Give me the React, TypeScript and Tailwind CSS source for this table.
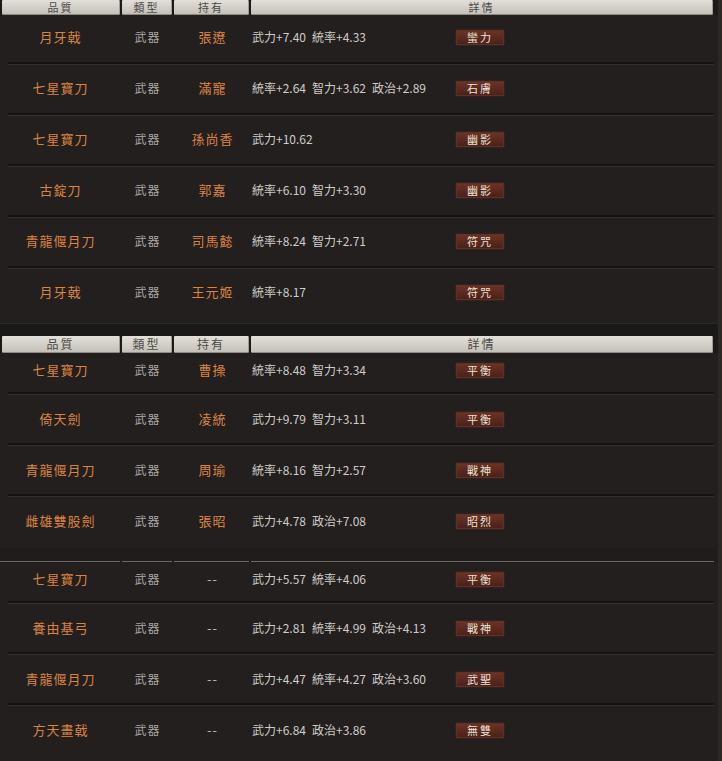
import React from "react";

interface Item {
  name: string;
  holder: string;
  stats: string[];
  badge: string;
}

const section1: Item[] = [
  { name: "月牙戟", holder: "張遼", stats: ["武力+7.40", "統率+4.33"], badge: "蠻力" },
  { name: "七星寶刀", holder: "滿寵", stats: ["統率+2.64", "智力+3.62", "政治+2.89"], badge: "石膚" },
  { name: "七星寶刀", holder: "孫尚香", stats: ["武力+10.62"], badge: "幽影" },
  { name: "古錠刀", holder: "郭嘉", stats: ["統率+6.10", "智力+3.30"], badge: "幽影" },
  { name: "青龍偃月刀", holder: "司馬懿", stats: ["統率+8.24", "智力+2.71"], badge: "符咒" },
  { name: "月牙戟", holder: "王元姬", stats: ["統率+8.17"], badge: "符咒" },
];

const section2: Item[] = [
  { name: "七星寶刀", holder: "曹操", stats: ["統率+8.48", "智力+3.34"], badge: "平衡" },
  { name: "倚天劍", holder: "凌統", stats: ["武力+9.79", "智力+3.11"], badge: "平衡" },
  { name: "青龍偃月刀", holder: "周瑜", stats: ["統率+8.16", "智力+2.57"], badge: "戰神" },
  { name: "雌雄雙股劍", holder: "張昭", stats: ["武力+4.78", "政治+7.08"], badge: "昭烈" },
];

const section3: Item[] = [
  { name: "七星寶刀", holder: "--", stats: ["武力+5.57", "統率+4.06"], badge: "平衡" },
  { name: "養由基弓", holder: "--", stats: ["武力+2.81", "統率+4.99", "政治+4.13"], badge: "戰神" },
  { name: "青龍偃月刀", holder: "--", stats: ["武力+4.47", "統率+4.27", "政治+3.60"], badge: "武聖" },
  { name: "方天畫戟", holder: "--", stats: ["武力+6.84", "政治+3.86"], badge: "無雙" },
];

const font = "font-['Noto_Sans_CJK_TC','Noto_Sans',sans-serif]";

function HeaderCell({ label, width, text }: { label: string; width: string; text: string }) {
  return (
    <div
      className={`${width} h-full flex items-center justify-center bg-gradient-to-b from-[#e2e0da] to-[#c4c1b9] border-b border-b-[#8e8a83] border-r border-r-[#a29e97] ${text} leading-none text-[#4b4a47] tracking-[2px] rounded-[1px]`}
    >
      {label}
    </div>
  );
}

function Header({ height, text = "text-[12px]" }: { height: string; text?: string }) {
  return (
    <div className={`flex gap-[2px] pl-[2px] pr-[5px] ${height}`}>
      <HeaderCell label="品質" width="w-[118px]" text={text} />
      <HeaderCell label="類型" width="w-[50px]" text={text} />
      <HeaderCell label="持有" width="w-[75px]" text={text} />
      <HeaderCell label="詳情" width="flex-1" text={text} />
    </div>
  );
}

function Row({ item, height, pad = "pb-[5px]", last }: { item: Item; height: string; pad?: string; last?: boolean }) {
  const empty = item.holder === "--";
  return (
    <div className={`relative ${height}`}>
      <div className={`grid grid-cols-[121px_53px_77px_1fr] items-center h-full ${pad}`}>
        <div className="text-center text-[13px] text-[#dc8340] tracking-[1px]">{item.name}</div>
        <div className="text-center text-[12px] text-[#a9a7a4] tracking-[1px]">武器</div>
        <div className={`text-center text-[13px] tracking-[1px] ${empty ? "text-[#b9b6b2]" : "text-[#dc8340]"}`}>
          {item.holder}
        </div>
        <div className="flex items-center">
          <div className="w-[205px] pl-[1px] flex gap-[6px] text-[12px] text-[#cfccc8]">
            {item.stats.map((s, i) => (
              <span key={i}>{s}</span>
            ))}
          </div>
          <div className="w-[48px] h-[15px] flex items-center justify-center bg-gradient-to-b from-[#6a3325] to-[#4b2119] border border-[#5c3128] text-[11px] leading-none text-[#ece2d6] tracking-[2px] shadow-[0_0_2px_rgba(120,50,30,0.6)]">
            {item.badge}
          </div>
        </div>
      </div>
      {!last && (
        <div className="absolute left-[8px] right-[4px] bottom-0">
          <div className="h-[2px] bg-[#151312]" />
          <div className="h-px bg-[#3b2b26]" />
        </div>
      )}
    </div>
  );
}

export default function App() {
  return (
    <div className={`w-[722px] h-[761px] overflow-hidden bg-[#1c1a19] ${font}`}>
      <div className="flex">
        <div className="flex-1">
          {/* first screenshot */}
          <Header height="h-[15px]" text="text-[11px]" />
          <div className="bg-[#221f1e]">
            <Row item={section1[0]} height="h-[50px]" pad="pb-[6px]" />
            {section1.slice(1).map((item, i) => (
              <Row key={i} item={item} height="h-[51px]" last={i === section1.length - 2} />
            ))}
            <div className="h-[4px] border-b border-[#2c2927]" />
          </div>
          <div className="h-[12px] bg-[#1b1918]" />

          {/* second screenshot */}
          <Header height="h-[17px]" />
          <div className="bg-[#221f1e]">
            <Row item={section2[0]} height="h-[42px]" pad="pb-[8px]" />
            {section2.slice(1).map((item, i) => (
              <Row key={i} item={item} height="h-[51px]" pad="pb-[3px]" last={i === 2} />
            ))}
          </div>
          <div className="h-[13px] bg-[#1f1c1b]" />
          <div className="flex gap-[2px] pr-[4px]">
            <div className="w-[120px] h-px bg-[#6b6762]" />
            <div className="w-[50px] h-px bg-[#6b6762]" />
            <div className="w-[75px] h-px bg-[#6b6762]" />
            <div className="flex-1 h-px bg-[#6b6762]" />
          </div>

          {/* third screenshot */}
          <div className="bg-[#221f1e]">
            <Row item={section3[0]} height="h-[42px]" pad="pb-[8px]" />
            {section3.slice(1).map((item, i) => (
              <Row key={i} item={item} height="h-[51px]" pad="pb-[3px]" last={i === 2} />
            ))}
            <div className="h-[8px]" />
          </div>
        </div>
        <div className="w-[4px] bg-[#2b2826]" />
      </div>
    </div>
  );
}
